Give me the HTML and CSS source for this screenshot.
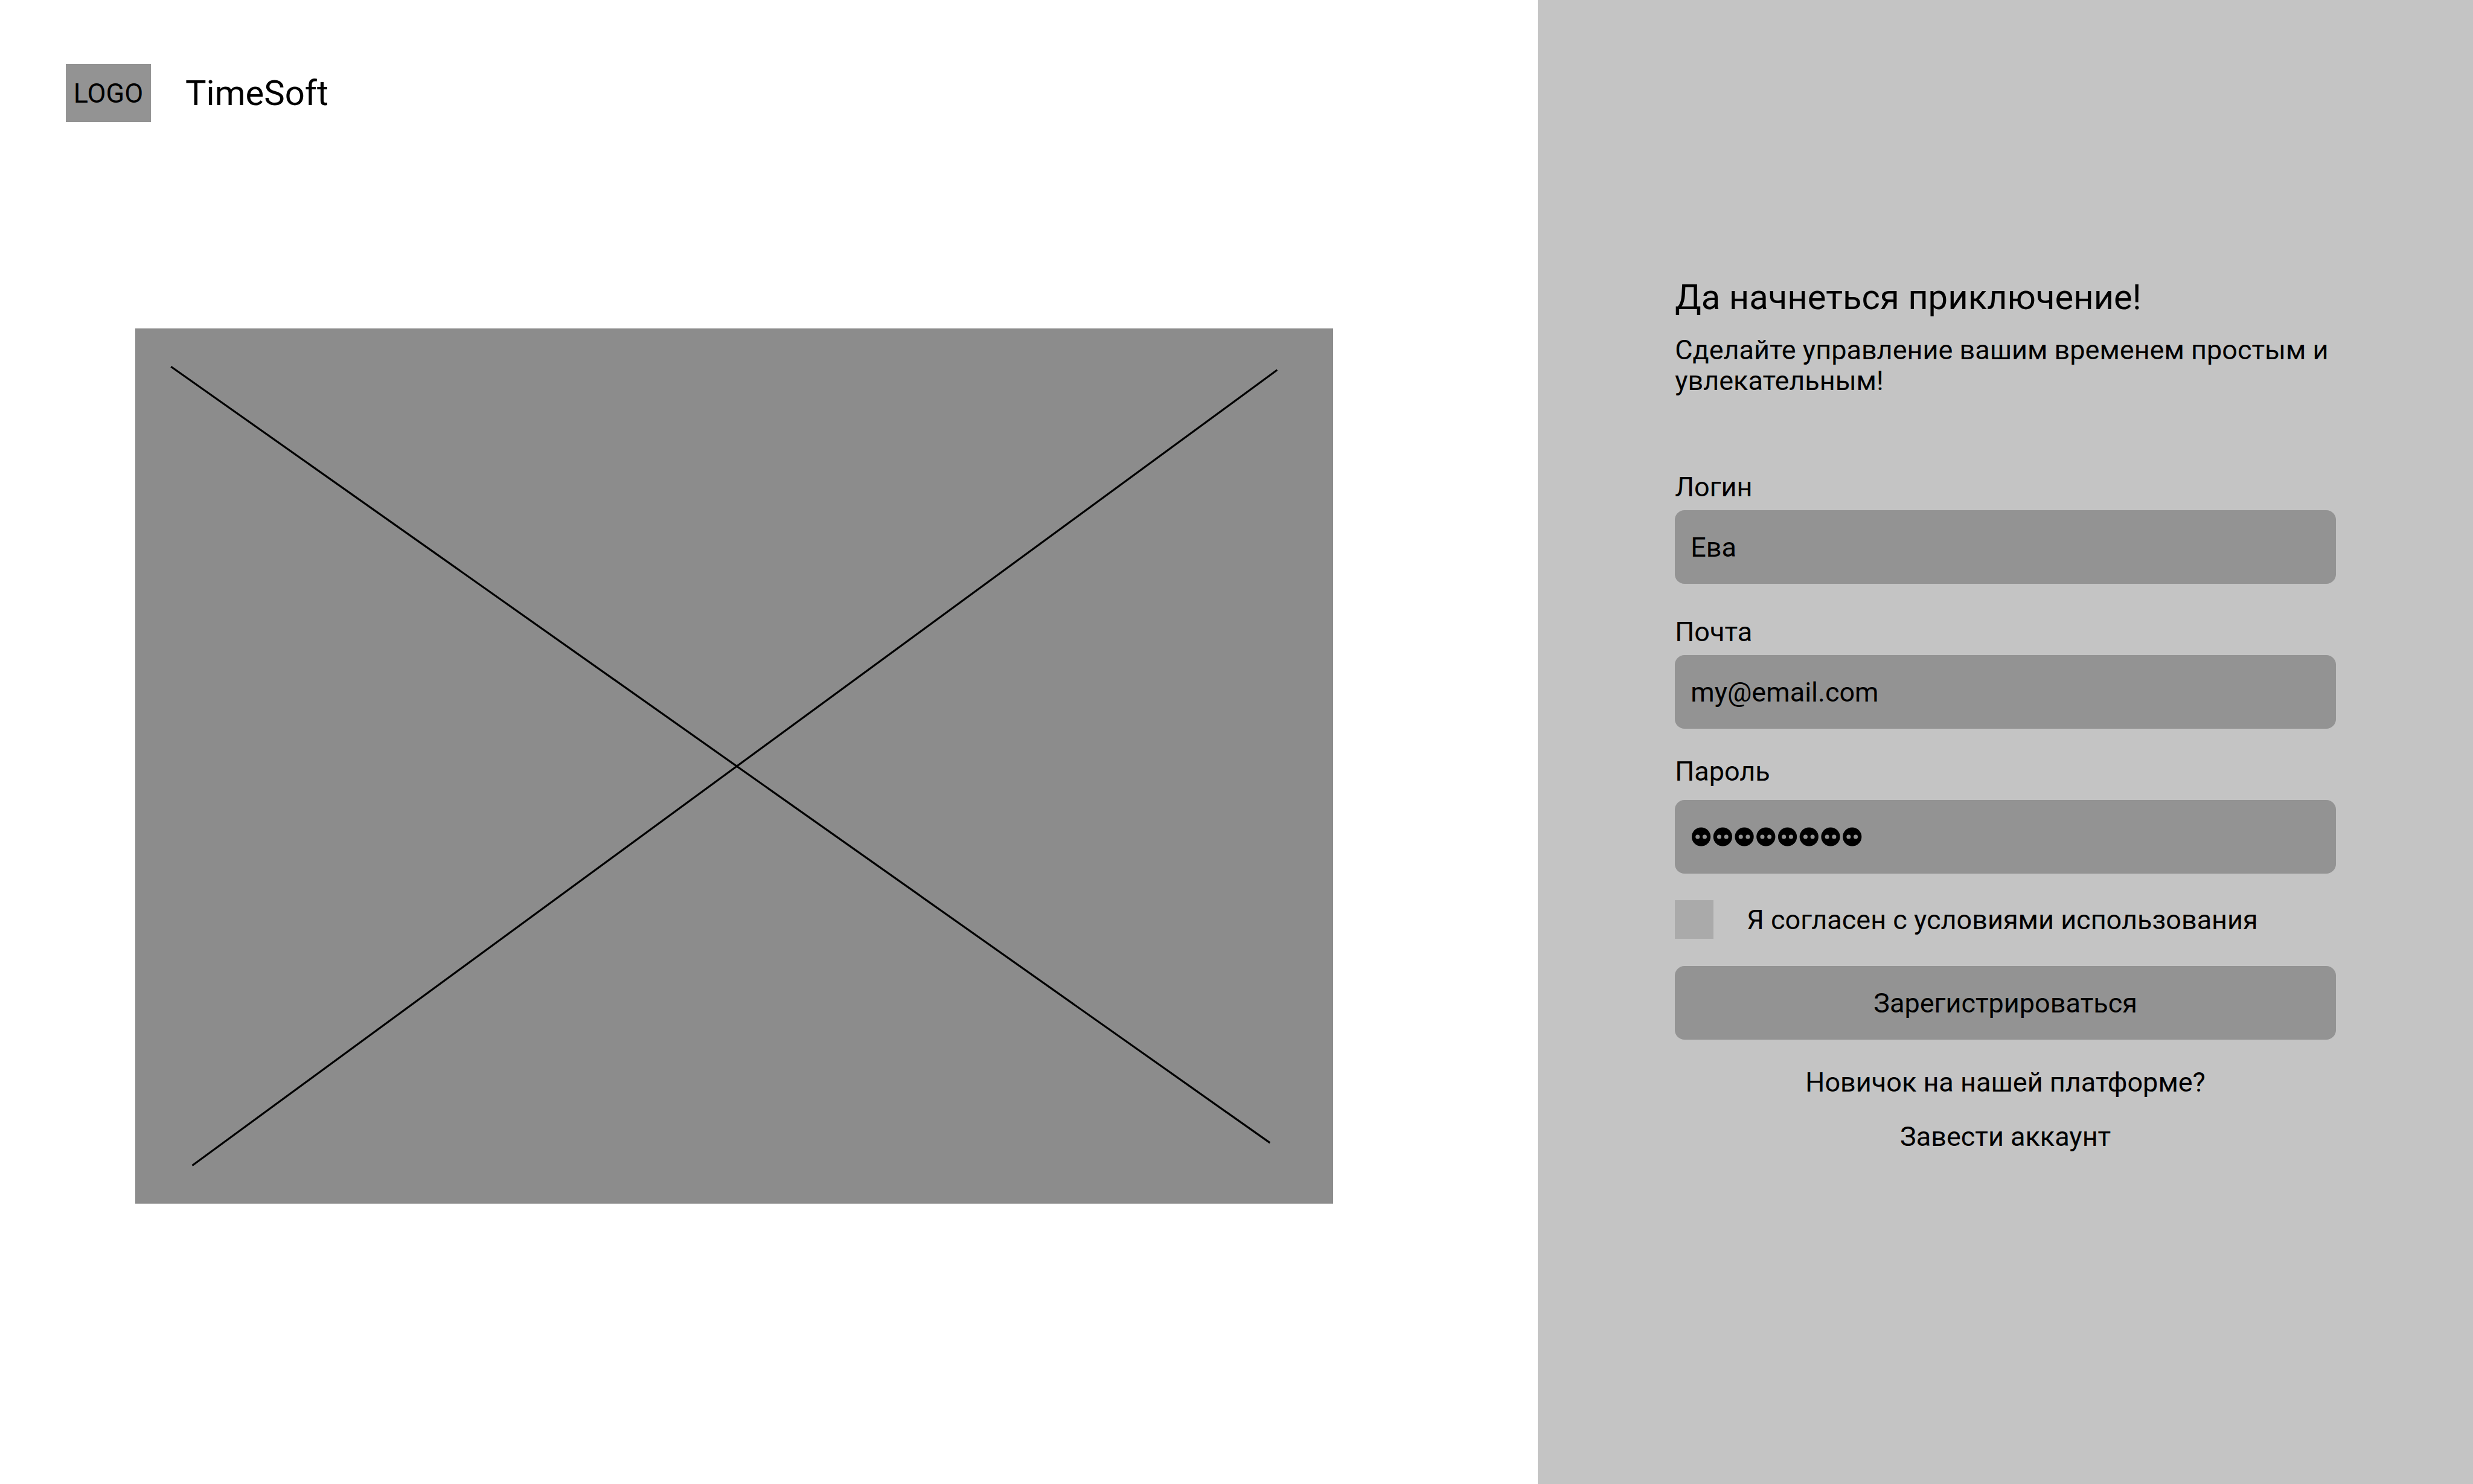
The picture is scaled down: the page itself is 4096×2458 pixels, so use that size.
FILE: index.html
```html
<!DOCTYPE html>
<html lang="ru">
<head>
  <meta charset="utf-8">
  <meta name="viewport" content="width=device-width, initial-scale=1">
  <title>TimeSoft</title>
  <link rel="stylesheet" href="styles.css">
</head>
<body>
  <div class="page">
    <main class="intro">
      <header class="brand">
        <div class="logo">LOGO</div>
        <div class="brand-name">TimeSoft</div>
      </header>
      <div class="cover">
        <svg class="placeholder" viewBox="0 0 2480 1812" aria-hidden="true">
          <rect width="2480" height="1812" fill="#8c8c8c"/>
          <path d="M74 79 2349 1686M118 1733 2364 86" fill="none" stroke="#000" stroke-width="4"/>
        </svg>
      </div>
    </main>
    <aside class="panel">
      <h1 class="title">Да начнеться приключение!</h1>
      <p class="subtitle">Сделайте управление вашим временем простым и увлекательным!</p>
      <form class="form">
        <div class="field field-login">
          <label for="login">Логин</label>
          <input class="control" id="login" type="text" value="Ева">
        </div>
        <div class="field field-email">
          <label for="email">Почта</label>
          <input class="control" id="email" type="email" value="my@email.com">
        </div>
        <div class="field field-password">
          <label for="password">Пароль</label>
          <div class="masked">
            <input class="control" id="password" type="password" autocomplete="new-password">
            <svg class="mask" viewBox="0 0 352 39" aria-hidden="true">
              <defs>
                <path id="dot" fill-rule="evenodd" d="M0 19.5a19.5 19.5 0 1 1 39 0a19.5 19.5 0 1 1-39 0zM7.8 19.5a4.4 4.4 0 1 0 8.8 0a4.4 4.4 0 1 0-8.8 0zM22.4 19.5a4.4 4.4 0 1 0 8.8 0a4.4 4.4 0 1 0-8.8 0z"/>
              </defs>
              <use href="#dot"/>
              <use href="#dot" x="44.6"/>
              <use href="#dot" x="89.2"/>
              <use href="#dot" x="133.8"/>
              <use href="#dot" x="178.4"/>
              <use href="#dot" x="223"/>
              <use href="#dot" x="267.6"/>
              <use href="#dot" x="312.2"/>
            </svg>
          </div>
        </div>
        <div class="terms">
          <input class="checkbox" id="terms" type="checkbox">
          <label for="terms">Я согласен с условиями использования</label>
        </div>
        <button class="submit" type="submit">Зарегистрироваться</button>
      </form>
      <footer class="account">
        <p>Новичок на нашей платформе?</p>
        <a href="#account">Завести аккаунт</a>
      </footer>
    </aside>
  </div>
</body>
</html>
```
FILE: styles.css
```css
* {
  box-sizing: border-box;
}

body {
  margin: 0;
  background: #fff;
  color: #000;
  font: 400 45px/51px Roboto, "Liberation Sans", sans-serif;
}

.page {
  display: grid;
  grid-template-columns: 199fr 121fr;
  min-height: 100vh;
}

/* Left side: brand and cover */
.intro {
  padding-top: 106px;
}

.brand {
  display: flex;
  align-items: center;
  gap: 57px;
  padding-left: 109px;
}

.logo {
  display: flex;
  align-items: center;
  justify-content: center;
  width: 141px;
  height: 96px;
  background: #939393;
}

.brand-name {
  font-size: 58px;
  line-height: 68px;
}

.cover {
  padding: 342px 339px 0 224px;
}

.placeholder {
  display: block;
  width: 100%;
}

/* Right side: sign-up panel */
.panel {
  padding: 458px 227px 0;
  background: #c4c4c4;
}

.title {
  margin: 0 0 28px;
  font-size: 58px;
  font-weight: 400;
  line-height: 68px;
}

.subtitle {
  margin: 0 0 125px;
}

.field {
  display: flex;
  flex-direction: column;
  gap: 13px;
}

.field-login {
  margin-bottom: 54px;
}

.field-email,
.terms {
  margin-bottom: 45px;
}

.field-password {
  gap: 22px;
  margin-bottom: 44px;
}

.control,
.submit {
  display: block;
  width: 100%;
  height: 122px;
  border: 0;
  border-radius: 16px;
  background: #939393;
  color: inherit;
  font: inherit;
}

.control {
  padding: 0 26px;
}

.masked {
  position: relative;
}

.mask {
  position: absolute;
  top: 0;
  bottom: 0;
  left: 28px;
  width: 282px;
  height: 32px;
  margin: auto 0;
  pointer-events: none;
}

.terms {
  display: flex;
  align-items: center;
  gap: 55px;
}

.checkbox {
  flex: none;
  width: 64px;
  height: 64px;
  margin: 0;
  appearance: none;
  background: #aaa;
}

.checkbox:checked {
  background: #555;
}

.submit {
  padding: 0;
  cursor: pointer;
}

.account {
  display: flex;
  flex-direction: column;
  align-items: center;
  gap: 39px;
  padding-top: 45px;
}

.account p {
  margin: 0;
}

.account a {
  color: inherit;
  text-decoration: none;
}
```
